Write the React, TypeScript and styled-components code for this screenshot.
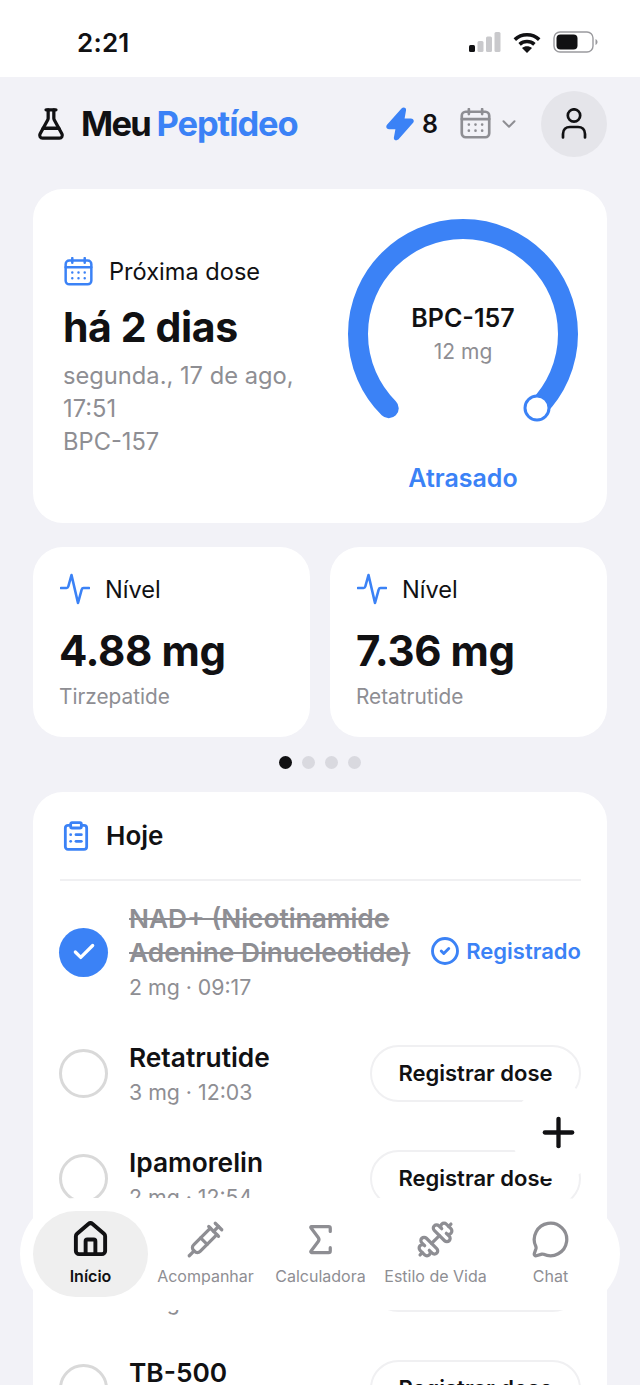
import styled, { createGlobalStyle } from "styled-components";
import {
  Check,
  ChevronDown,
  CircleCheck,
  ClipboardList,
  Dumbbell,
  FlaskConical,
  House,
  MessageCircle,
  Plus,
  Sigma,
  Syringe,
} from "lucide-react";

const blue = "#3b82f6";
const gray = "#8e8e93";
const ink = "#111113";

const GlobalStyle = createGlobalStyle`
  html, body {
    margin: 0;
    padding: 0;
    background: #f2f2f7;
    font-family: Inter, "Liberation Sans", sans-serif;
    color: ${ink};
  }
`;

const Page = styled.div`
  position: relative;
  width: 640px;
  height: 1385px;
  overflow: hidden;
  background: #f2f2f7;
`;

const StatusBar = styled.div`
  height: 77px;
  background: #fff;
  display: flex;
  align-items: center;
  justify-content: space-between;
  padding: 7px 42px 0 77px;
  box-sizing: border-box;
`;

const Time = styled.span`
  font-size: 26px;
  font-weight: 600;
  letter-spacing: 0.2px;
`;

const StatusIcons = styled.div`
  display: flex;
  align-items: center;
  gap: 12px;
`;

const Header = styled.header`
  height: 93px;
  margin-bottom: 19px;
  display: flex;
  align-items: center;
  padding: 0 33px 0 34px;
`;

const Title = styled.h1`
  margin: 0 0 0 13px;
  font-size: 34.5px;
  font-weight: 700;
  letter-spacing: -1.7px;
  flex: 1;
`;

const TitleAccent = styled.span`
  color: ${blue};
  letter-spacing: -1.1px;
`;

const Streak = styled.div`
  display: flex;
  align-items: center;
  gap: 8px;
  font-size: 25px;
  font-weight: 600;
  margin-right: 22px;
`;

const CalendarPicker = styled.div`
  display: flex;
  align-items: center;
  gap: 7px;
  color: ${gray};
  margin-right: 21px;
`;

const Avatar = styled.div`
  width: 66px;
  height: 66px;
  border-radius: 50%;
  background: #e5e5ea;
  display: flex;
  align-items: center;
  justify-content: center;
`;

const Main = styled.main`
  padding: 0 33px;
  display: flex;
  flex-direction: column;
`;

const Card = styled.section`
  background: #fff;
  border-radius: 30px;
`;

const Hero = styled(Card)`
  height: 334px;
  display: flex;
  align-items: center;
  justify-content: space-between;
  padding: 0 29px 0 30px;
  box-sizing: border-box;
`;

const HeroText = styled.div`
  width: 250px;
  padding-top: 2px;
`;

const HeadRow = styled.div`
  display: flex;
  align-items: center;
  gap: 16px;
  font-size: 23.6px;
`;

const HeroHead = styled(HeadRow)`
  padding-left: 1px;
`;

const StatHead = styled(HeadRow)`
  gap: 15px;
`;

const HeroWhen = styled.div`
  font-size: 41px;
  font-weight: 700;
  letter-spacing: -0.4px;
  margin: 17px 0 8px;
  line-height: 48px;
`;

const HeroMeta = styled.div`
  font-size: 23.7px;
  line-height: 33px;
  color: ${gray};
`;

const GaugeColumn = styled.div`
  display: flex;
  flex-direction: column;
  align-items: center;
  width: 230px;
`;

const Gauge = styled.div`
  position: relative;
  width: 230px;
  height: 230px;
`;

const GaugeLabel = styled.div`
  position: absolute;
  inset: 0;
  display: flex;
  flex-direction: column;
  align-items: center;
  justify-content: center;
  padding-top: 4px;
  box-sizing: border-box;
`;

const GaugeName = styled.div`
  font-size: 25px;
  font-weight: 600;
  line-height: 32px;
`;

const GaugeDose = styled.div`
  font-size: 21px;
  color: ${gray};
  line-height: 36px;
`;

const GaugeStatus = styled.div`
  margin-top: 13px;
  font-size: 25px;
  font-weight: 600;
  color: ${blue};
  line-height: 32px;
`;

const StatGrid = styled.div`
  display: grid;
  grid-template-columns: 277px 277px;
  gap: 20px;
  margin-top: 24px;
`;

const StatCard = styled(Card)`
  height: 190px;
  padding: 26px 27px 0;
  box-sizing: border-box;
`;

const StatValue = styled.div`
  font-size: 42px;
  font-weight: 700;
  letter-spacing: -0.4px;
  line-height: 50px;
  margin: 21px 0 0 -1px;
`;

const StatName = styled.div`
  font-size: 20.8px;
  color: ${gray};
  line-height: 28px;
  margin: 7px 0 0 -1px;
`;

const Dots = styled.div`
  display: flex;
  justify-content: center;
  gap: 10px;
  margin: 19px 0 23px;
`;

const Dot = styled.span<{ $active?: boolean }>`
  width: 13px;
  height: 13px;
  border-radius: 50%;
  background: ${(p) => (p.$active ? ink : "#d9d9df")};
`;

const TodayCard = styled(Card)`
  padding: 0 26px 0 27px;
`;

const TodayHead = styled.div`
  height: 87px;
  display: flex;
  align-items: center;
  gap: 14px;
  border-bottom: 2px solid #f0f0f2;
  font-size: 26px;
  font-weight: 600;
`;

const Row = styled.div<{ $first?: boolean }>`
  display: flex;
  align-items: center;
  gap: 21px;
  margin-left: -1px;
  height: ${(p) => (p.$first ? "138px" : "105px")};
  margin-top: ${(p) => (p.$first ? "2px" : "0")};
`;

const Tick = styled.div<{ $done?: boolean }>`
  width: 49px;
  height: 49px;
  flex: none;
  border-radius: 50%;
  box-sizing: border-box;
  display: flex;
  align-items: center;
  justify-content: center;
  color: #fff;
  background: ${(p) => (p.$done ? blue : "#fff")};
  border: ${(p) => (p.$done ? "none" : "3px solid #d9d9d9")};
`;

const RowText = styled.div`
  flex: 1;
  min-width: 0;
`;

const DoseName = styled.div<{ $done?: boolean }>`
  font-size: 26.3px;
  font-weight: 600;
  line-height: 34px;
  color: ${(p) => (p.$done ? gray : ink)};
  text-decoration: ${(p) => (p.$done ? "line-through" : "none")};
`;

const DoseMeta = styled.div`
  font-size: 21.3px;
  color: ${gray};
  line-height: 30px;
  margin-top: 2px;
`;

const Logged = styled.div`
  display: flex;
  align-items: center;
  gap: 6px;
  flex: none;
  font-size: 22px;
  font-weight: 600;
  color: ${blue};
  margin-left: -20px;
  padding-bottom: 2px;
`;

const DoseButton = styled.button`
  width: 211px;
  height: 57px;
  flex: none;
  border: 2px solid #f0f0f2;
  border-radius: 29px;
  background: #fff;
  font: 600 22px Inter, "Liberation Sans", sans-serif;
  color: ${ink};
  padding: 0 0 2px;
`;

const Fab = styled.button`
  position: absolute;
  left: 511px;
  top: 1085px;
  width: 94px;
  height: 94px;
  border: none;
  border-radius: 50%;
  background: #fff;
  display: flex;
  align-items: center;
  justify-content: center;
  padding: 0;
  color: ${ink};
`;

const TabBar = styled.nav`
  position: absolute;
  left: 20px;
  top: 1198px;
  width: 600px;
  height: 112px;
  border-radius: 56px;
  background: #fff;
  box-sizing: border-box;
  padding: 13px 13px;
  display: grid;
  grid-template-columns: repeat(5, 115px);
`;

const Tab = styled.div<{ $active?: boolean }>`
  height: 86px;
  border-radius: 43px;
  background: ${(p) => (p.$active ? "#efefef" : "transparent")};
  color: ${(p) => (p.$active ? ink : gray)};
  font-size: 16px;
  font-weight: ${(p) => (p.$active ? 600 : 400)};
  display: flex;
  flex-direction: column;
  align-items: center;
  padding-top: 9px;
  box-sizing: border-box;
  gap: 7px;
  white-space: nowrap;
`;

function CalendarIcon({ size, color }: { size: number; color: string }) {
  return (
    <svg width={size} height={size} viewBox="0 0 28 28" fill="none" stroke={color} strokeWidth="2.4" strokeLinecap="round">
      <rect x="1.6" y="3.4" width="24.8" height="23" rx="3.5" />
      <path d="M1.6 10h24.8M8 1v4.5M20 1v4.5" />
      <g strokeWidth="2.4">
        <path d="M8 15h.01M14 15h.01M20 15h.01M8 20.5h.01M14 20.5h.01M20 20.5h.01" />
      </g>
    </svg>
  );
}

function PulseIcon() {
  return (
    <svg width="30" height="32" viewBox="0 0 30 32" fill="none" stroke={blue} strokeWidth="2.6" strokeLinecap="round" strokeLinejoin="round">
      <path d="M1 15h5.5c1 0 1.5-.5 1.8-1.5L11.5 2l6.5 28 3.7-13.5c.3-1 .8-1.5 1.8-1.5H29" />
    </svg>
  );
}

function UserIcon() {
  return (
    <svg width="26" height="31" viewBox="0 0 26 31" fill="none" stroke={ink} strokeWidth="2.7" strokeLinecap="round">
      <circle cx="13" cy="7.500" r="6.2" />
      <path d="M2 29.500v-3.500c0-4.500 3-7 7-7h8c4 0 7 2.500 7 7v3.500" />
    </svg>
  );
}

function BoltIcon() {
  return (
    <svg width="28" height="34" viewBox="0 0 28 34" fill={blue}>
      <path d="M15.5 1.5C17.3-.2 20.6.6 20 3.4L18.6 11.5h6.2c2.6 0 3.8 2.3 2.3 4.3L13 31.8c-2 2.4-5.6 1.8-5.1-1.4l1.5-8.2H3.2C.6 22.200-.6 19.700 1 17.800Z" />
    </svg>
  );
}

function StatusGlyphs() {
  return (
    <StatusIcons>
      <svg width="32" height="20" viewBox="0 0 32 20" fill="#c9c9cc">
        <rect x="0" y="13" width="6" height="7" rx="1.5" fill={ink} />
        <rect x="8.5" y="9" width="6" height="11" rx="1.5" />
        <rect x="17" y="4.500" width="6" height="15.500" rx="1.5" />
        <rect x="25.5" y="0" width="6" height="20" rx="1.5" />
      </svg>
      <svg width="28" height="21" viewBox="0 0 28 21" fill="none" stroke={ink} strokeWidth="3.6">
        <path d="M1.800 7.600c6.800-6.400 17.600-6.400 24.400 0M6.600 12.400c4.200-3.800 10.600-3.800 14.800 0" />
        <path d="M14 21l-5-5c2.800-2.400 7.200-2.400 10 0Z" fill={ink} stroke="none" />
      </svg>
      <svg width="45" height="22" viewBox="0 0 45 22" fill="none">
        <rect x="1" y="1" width="39" height="20" rx="6" stroke="#9a9a9e" strokeWidth="1.4" />
        <rect x="3.5" y="3.5" width="21" height="15" rx="4" fill={ink} />
        <path d="M42.5 8v6c1.2-.5 2-1.7 2-3s-.8-2.5-2-3Z" fill="#9a9a9e" />
      </svg>
    </StatusIcons>
  );
}

function DoseGauge() {
  return (
    <svg width="230" height="230" viewBox="0 0 230 230" fill="none">
      <path
        d="M40.75 189.25 A105 105 0 1 1 189.25 189.25"
        stroke={blue}
        strokeWidth="20"
        strokeLinecap="round"
      />
      <circle cx="189" cy="189" r="12" fill="#fff" stroke={blue} strokeWidth="3" />
    </svg>
  );
}

const levels = [
  { value: "4.88 mg", name: "Tirzepatide" },
  { value: "7.36 mg", name: "Retatrutide" },
];

const doses = [
  { name: "Retatrutide", meta: "3 mg · 12:03" },
  { name: "Ipamorelin", meta: "2 mg · 12:54" },
  { name: "Ipamorelin", meta: "2 mg · 13:00" },
  { name: "TB-500", meta: "5 mg · 15:30" },
];

const tabs = [
  { label: "Início", Icon: House, active: true },
  { label: "Acompanhar", Icon: Syringe },
  { label: "Calculadora", Icon: Sigma },
  { label: "Estilo de Vida", Icon: Dumbbell },
  { label: "Chat", Icon: MessageCircle },
];

export default function App() {
  return (
    <Page>
      <GlobalStyle />
      <StatusBar>
        <Time>2:21</Time>
        <StatusGlyphs />
      </StatusBar>

      <Header>
        <FlaskConical size={34} color={ink} strokeWidth={2.3} />
        <Title>
          Meu <TitleAccent>Peptídeo</TitleAccent>
        </Title>
        <Streak>
          <BoltIcon />8
        </Streak>
        <CalendarPicker>
          <CalendarIcon size={31} color={gray} />
          <ChevronDown size={22} strokeWidth={2.2} />
        </CalendarPicker>
        <Avatar>
          <UserIcon />
        </Avatar>
      </Header>

      <Main>
        <Hero>
          <HeroText>
            <HeroHead>
              <CalendarIcon size={29} color={blue} />
              Próxima dose
            </HeroHead>
            <HeroWhen>há 2 dias</HeroWhen>
            <HeroMeta>
              segunda., 17 de ago,
              <br />
              17:51
              <br />
              BPC-157
            </HeroMeta>
          </HeroText>
          <GaugeColumn>
            <Gauge>
              <DoseGauge />
              <GaugeLabel>
                <GaugeName>BPC-157</GaugeName>
                <GaugeDose>12 mg</GaugeDose>
              </GaugeLabel>
            </Gauge>
            <GaugeStatus>Atrasado</GaugeStatus>
          </GaugeColumn>
        </Hero>

        <StatGrid>
          {levels.map((level) => (
            <StatCard key={level.name}>
              <StatHead>
                <PulseIcon />
                Nível
              </StatHead>
              <StatValue>{level.value}</StatValue>
              <StatName>{level.name}</StatName>
            </StatCard>
          ))}
        </StatGrid>

        <Dots>
          <Dot $active />
          <Dot />
          <Dot />
          <Dot />
        </Dots>

        <TodayCard>
          <TodayHead>
            <ClipboardList size={32} color={blue} strokeWidth={2.1} />
            Hoje
          </TodayHead>
          <Row $first>
            <Tick $done>
              <Check size={26} strokeWidth={3} />
            </Tick>
            <RowText>
              <DoseName $done>NAD+ (Nicotinamide Adenine Dinucleotide)</DoseName>
              <DoseMeta>2 mg · 09:17</DoseMeta>
            </RowText>
            <Logged>
              <CircleCheck size={30} strokeWidth={2.3} />
              Registrado
            </Logged>
          </Row>
          {doses.map((dose, i) => (
            <Row key={i}>
              <Tick />
              <RowText>
                <DoseName>{dose.name}</DoseName>
                <DoseMeta>{dose.meta}</DoseMeta>
              </RowText>
              <DoseButton>Registrar dose</DoseButton>
            </Row>
          ))}
        </TodayCard>
      </Main>

      <Fab aria-label="Adicionar">
        <Plus size={47} strokeWidth={2.2} />
      </Fab>

      <TabBar>
        {tabs.map(({ label, Icon, active }) => (
          <Tab key={label} $active={active}>
            <Icon size={39} strokeWidth={active ? 2.4 : 2} />
            {label}
          </Tab>
        ))}
      </TabBar>
    </Page>
  );
}
